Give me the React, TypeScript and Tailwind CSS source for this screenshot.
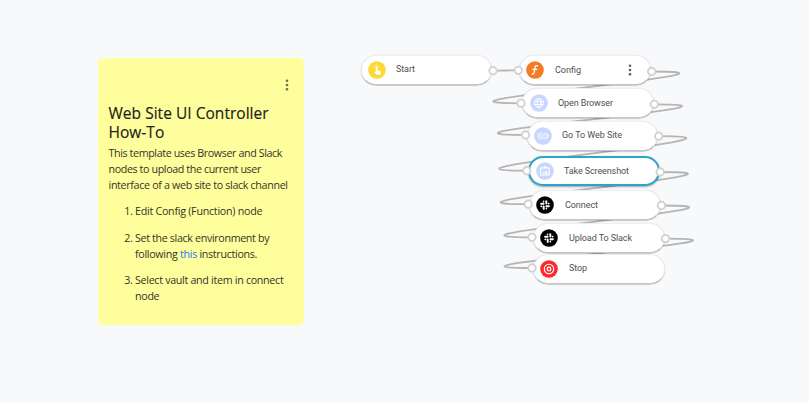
import React from "react";

type Kind = "start" | "config" | "globe" | "link" | "camera" | "slack" | "stop";

interface FlowNode {
  label: string;
  kind: Kind;
  x: number;
  y: number;
  labelWidth: number;
  input?: [number, number];
  output?: [number, number];
  menu?: boolean;
  selected?: boolean;
}

const nodes: FlowNode[] = [
  { label: "Start", kind: "start", x: 360.7, y: 54.7, labelWidth: 19, output: [493, 70.7] },
  { label: "Config", kind: "config", x: 519.3, y: 55.4, labelWidth: 26, input: [518.3, 70.3], output: [651.6, 71.5], menu: true },
  { label: "Open Browser", kind: "globe", x: 522.4, y: 88.4, labelWidth: 55, input: [521, 103.3], output: [654.3, 104.3] },
  { label: "Go To Web Site", kind: "link", x: 526.7, y: 120.5, labelWidth: 60, input: [525.6, 135], output: [658.7, 136.2] },
  { label: "Take Screenshot", kind: "camera", x: 528, y: 156, labelWidth: 65, input: [526.8, 170.7], output: [660.2, 172], selected: true },
  { label: "Connect", kind: "slack", x: 529.3, y: 190, labelWidth: 33, input: [528.2, 204.2], output: [661.4, 205.5] },
  { label: "Upload To Slack", kind: "slack", x: 533.3, y: 223, labelWidth: 63, input: [532, 237.3], output: [665.5, 238.6] },
  { label: "Stop", kind: "stop", x: 533.2, y: 253.5, labelWidth: 18, input: [532, 268] },
];

const iconColors: Record<Kind, string> = {
  start: "#fdd835",
  config: "#f47b25",
  globe: "#c8d7ff",
  link: "#c8d7ff",
  camera: "#c8d7ff",
  slack: "#000000",
  stop: "#fb2a2f",
};

function Glyph({ kind }: { kind: Kind }) {
  const line = { fill: "none", stroke: "white", strokeLinecap: "round" as const, strokeLinejoin: "round" as const };
  switch (kind) {
    case "start":
      return (
        <g>
          <path {...line} strokeWidth="0.6" opacity="0.7" d="M7 7.4a2.1 2.1 0 1 1 3.2 0" />
          <path fill="white" d="M7.8 6a.8.8 0 0 1 1.6 0v3.2l2.8.7q.8.3.7 1.1l-.4 2.8H8.7L5.8 11l.6-.6 1.4.6z" />
        </g>
      );
    case "config":
      return <path {...line} strokeWidth="1.3" d="M11.5 4.9q-2-.9-2.4 1.3l-.9 5.2q-.4 2.1-2 1.4M6.8 8.3h4" />;
    case "globe":
      return (
        <g {...line} strokeWidth="0.9">
          <circle cx="9" cy="9" r="4.5" />
          <ellipse cx="9" cy="9" rx="1.9" ry="4.5" />
          <path d="M5 7.5h8M5 10.5h8" />
        </g>
      );
    case "link":
      return <path {...line} strokeWidth="1.1" d="M8.1 6.8H6.5a2.2 2.2 0 0 0 0 4.4h1.6M9.9 6.8h1.6a2.2 2.2 0 0 1 0 4.4H9.9M7.2 9h3.6" />;
    case "camera":
      return (
        <g>
          <path fill="white" d="M5 5.5h2l.8-1.2h2.4l.8 1.2h2q.8 0 .8.8v6.4q0 .8-.8.8H5q-.8 0-.8-.8V6.3q0-.8.8-.8z" />
          <path fill="#c8d7ff" d="M5.3 6.6h7.4v5.8H5.3z" />
          <path fill="white" d="m6.2 11.6 1.6-2 1 1.1 1.5-2.1 2 3z" />
        </g>
      );
    case "slack":
      return (
        <g {...line} strokeWidth="1.9">
          <path d="M5.1 7.7h2.5M10.3 5.1v2.5M12.9 10.3h-2.5M7.7 12.9v-2.5" />
          <path strokeWidth="1.6" d="M7.6 5.2v.4M12.8 7.6h-.4M10.4 12.8v-.4M5.2 10.4h.4" />
        </g>
      );
    case "stop":
      return (
        <g>
          <circle cx="9" cy="9" r="4.7" {...line} strokeWidth="1.1" />
          <circle cx="9" cy="9" r="1.8" {...line} strokeWidth="1.3" />
        </g>
      );
  }
}

function Dots({ className }: { className: string }) {
  return (
    <svg className={className} width="4" height="12" viewBox="0 0 4 12" fill="currentColor">
      <circle cx="2" cy="1.8" r="1.3" />
      <circle cx="2" cy="6" r="1.3" />
      <circle cx="2" cy="10.2" r="1.3" />
    </svg>
  );
}

function NodeCard({ node }: { node: FlowNode }) {
  const frame = node.selected
    ? "border-2 border-[#2ba5ca] shadow-[0_1px_2px_rgba(0,0,0,0.35)]"
    : "border border-[#eceff3] border-b-[#c4c5c7] shadow-[0_0.5px_1px_rgba(0,0,0,0.35)]";
  return (
    <div
      className={"absolute flex h-[30px] w-[131.5px] items-center rounded-full bg-white " + frame}
      style={{ left: node.x, top: node.y }}
    >
      <svg className={node.selected ? "ml-[5.5px] shrink-0" : "ml-[6.2px] shrink-0"} width="18" height="18" viewBox="0 0 18 18">
        <circle cx="9" cy="9" r="8.8" fill={iconColors[node.kind]} />
        <Glyph kind={node.kind} />
      </svg>
      <svg className="ml-[10.2px] -mt-px shrink-0 overflow-visible" width={node.labelWidth} height="14">
        <text x="0" y="10" textLength={node.labelWidth} className="fill-[#505050] font-[Roboto,sans-serif] text-[9px]">
          {node.label}
        </text>
      </svg>
      {node.menu && <Dots className="ml-auto mr-[17.5px] text-[#5c5c5c]" />}
    </div>
  );
}

function connect(from: [number, number], to: [number, number]) {
  const reach = from[0] > to[0] ? 133 : 12;
  return `M${from[0]} ${from[1]}C${from[0] + reach} ${from[1]} ${to[0] - reach} ${to[1]} ${to[0]} ${to[1]}`;
}

export default function App() {
  return (
    <main className="relative h-[402px] w-[809px] overflow-hidden bg-[#f8f9fb]">
      <section className="absolute left-[98px] top-[58px] h-[267px] w-[206px] rounded-[5px] bg-[#fffe9c] pl-[10.5px] pt-[21px] font-['Open_Sans','Noto_Sans',sans-serif] text-[#33342a]">
        <div className="mr-[15px] flex h-[25px] justify-end">
          <Dots className="text-[#6c6c48]" />
        </div>
        <h1 className="whitespace-nowrap text-[15.5px] font-medium leading-[19px] tracking-[0.03px] text-[#20211d] [-webkit-text-stroke:0.15px_#20211d]">
          <span className="block">Web Site UI Controller</span>
          <span className="block">How-To</span>
        </h1>
        <p className="mt-[3px] whitespace-nowrap text-[10.7px] leading-4 tracking-[-0.38px]">
          This template uses Browser and Slack
          <br />
          nodes to upload the current user
          <br />
          <span className="tracking-[-0.32px]">interface of a web site to slack channel</span>
        </p>
        <ol className="mt-[10px] flex list-decimal flex-col gap-[10.5px] whitespace-nowrap pl-[26.5px] text-[10.7px] leading-4 tracking-[-0.3px]">
          <li><span className="tracking-[-0.26px]">Edit Config (Function) node</span></li>
          <li>
            <span className="tracking-[-0.34px]">Set the slack environment by</span>
            <br />
            following <a className="text-[#1d78f2]">this</a> instructions.
          </li>
          <li>
            Select vault and item in connect
            <br />
            node
          </li>
        </ol>
      </section>

      <svg className="absolute inset-0" width="809" height="402" fill="none" stroke="#b5b5b6" strokeWidth="1.8">
        {nodes.slice(1).map((node, i) => (
          <path key={node.label} d={connect(nodes[i].output!, node.input!)} />
        ))}
      </svg>
      {nodes.map((node) => (
        <NodeCard key={node.label} node={node} />
      ))}
      <svg className="absolute inset-0" width="809" height="402" fill="white" stroke="#d2d2d2" strokeWidth="1.9">
        {nodes.flatMap((node) =>
          [node.input, node.output].map(
            (port, i) => port && <circle key={node.label + i} cx={port[0]} cy={port[1]} r="3.7" />,
          ),
        )}
      </svg>
    </main>
  );
}
